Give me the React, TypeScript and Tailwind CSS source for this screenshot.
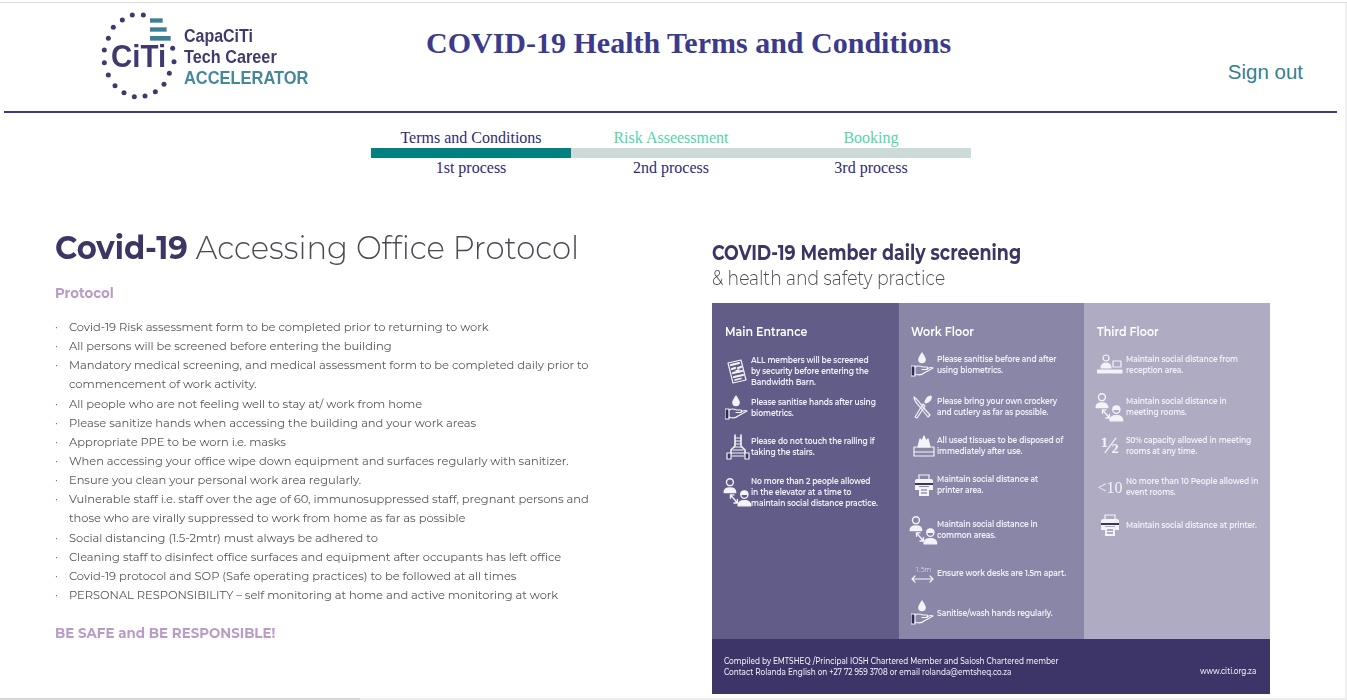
const sans = "font-['Montserrat','Open_Sans','Noto_Sans',sans-serif]";

type IconName = "form" | "hand" | "stairs" | "people" | "cutlery" | "tissue" | "printer" | "arrow" | "desk" | "half" | "lt10";

function Icon({ name }: { name: IconName }) {
  const c = { fill: "none", stroke: "#f4f3f8", strokeWidth: 1.2, strokeLinecap: "round" as const, strokeLinejoin: "round" as const };
  const w = "#f4f3f8";
  if (name === "people") {
    return (
      <svg width="30" height="30" viewBox="0 0 26 26" className="shrink-0 mx-[-2px] my-[-2px]">
        <g {...c}>
          <circle cx="6" cy="4.500" r="3" />
          <path d="M1 13.500c0-3 2-4 5-4s5 1 5 4z" fill={w} />
          <circle cx="18.500" cy="15.500" r="3" fill="none" />
          <path d="M15.500 15c0-2 1.500-3 3-3s3 1 3 3z" fill={w} />
          <path d="M13 25c0-3 2-4.500 5.500-4.500S24 22 24 25z" fill={w} />
          <path d="M6.500 15.500l6 7M6.500 15.500v3M6.500 15.500h3M12.500 22.500h-3M12.500 22.500v-3" />
        </g>
      </svg>
    );
  }
  return (
    <svg width="26" height="26" viewBox="0 0 26 26" className="shrink-0">
      {name === "form" && (
        <g {...c}>
          <path d="M3 5l13-3 5 20-13 3z" />
          <path d="M6 7l8-2M7 11l3-1M13 10l3-1M8 15l9-2M9 19l9-2" strokeWidth={2.2} />
          <path d="M11 13l3-1M10 22l6-1.500" strokeWidth={1.6} />
        </g>
      )}
      {name === "hand" && (
        <g {...c}>
          <path d="M11 1c-1.800 3-3.200 4.500-3.200 6.500a3.200 3.200 0 006.400 0C14.200 5.500 12.800 4 11 1z" fill={w} />
          <path d="M0 14h4v10H0z" fill="#2e2a55" />
          <path d="M4 15c3-2 5-1 8 0h4c1.500 1 .5 2.500-1 2.500h-4M4 22c5 2 7 1 9-1l9-5c-2-1.500-4 0-7 1.500" />
        </g>
      )}
      {name === "stairs" && (
        <g {...c}>
          <path d="M10 1v11L6 16v4M16 1v11l4 4v4" strokeWidth={1.6} />
          <path d="M10 4h6M10 7h6M10 10h6M9 13h8M8 16h10M7 19h12M7 22h12" />
          <path d="M2 19h4v6H2zM20 19h4v6h-4z" fill="#3a3560" />
        </g>
      )}
      {name === "cutlery" && (
        <g {...c}>
          <path d="M3 3c0 4 3 7 6 10l8 10 2-2-8-9C9 9 6 5 3 3z" />
          <path d="M4 23l2 1L14 12l-2-2z" />
          <path d="M15 9l-1-1c1-3 3-6 6-6 1 2-1 6-5 7z" fill={w} />
        </g>
      )}
      {name === "tissue" && (
        <g {...c}>
          <path d="M3 14h20v9H3zM3 19h20" />
          <path d="M7 14l2-8 2 2 2-5 2 5 2-2 2 8z" fill={w} />
        </g>
      )}
      {name === "printer" && (
        <g>
          <path d="M8 3h10v5H8z" fill="none" stroke={w} strokeWidth="1.200" />
          <path d="M6 7h14c1.500 0 2 1 2 2v9h-4v-4H8v4H4V9c0-1 .5-2 2-2z" fill={w} />
          <path d="M4 11h18v2H4z" fill="#3a3560" />
          <path d="M8 15h10v9H8z" fill={w} />
          <path d="M10 18h6M10 21h6" stroke="#6a6590" strokeWidth="1" />
        </g>
      )}
      {name === "arrow" && (
        <g {...c}>
          <path d="M1 19h21M4 16l-3 3 3 3M19 16l3 3-3 3" />
          <text x="4" y="12" fontSize="7" fill={w} stroke="none" fontWeight="300" fontFamily="Open Sans">1.5m</text>
        </g>
      )}
      {name === "desk" && (
        <g {...c}>
          <circle cx="9" cy="6" r="3" />
          <path d="M4 16c0-3 2-5 5-5s5 2 5 5z" fill={w} />
          <path d="M16 9h8v6h-8z" />
          <path d="M0 18h25v3H0z" fill={w} />
        </g>
      )}
      {name === "half" && (
        <text x="13" y="20" textAnchor="middle" fontSize="24" fontWeight="700" fill={w} fontFamily="Liberation Serif">½</text>
      )}
      {name === "lt10" && (
        <text x="13" y="19" textAnchor="middle" fontSize="16" fill={w} fontFamily="Liberation Serif">&lt;10</text>
      )}
    </svg>
  );
}

function Row({ icon, lines, className }: { icon: IconName; lines: string[]; className: string }) {
  return (
    <div className={`flex items-center ${className}`}>
      <Icon name={icon} />
      <div className="text-[8.500px] leading-[11px] font-semibold text-[#f1f0f6] tracking-[-0.1px] whitespace-nowrap scale-x-[0.89] origin-left">
        {lines.map((l) => (
          <div key={l}>{l}</div>
        ))}
      </div>
    </div>
  );
}

const protocol = [
  ["Covid-19 Risk assessment form to be completed prior to returning to work"],
  ["All persons will be screened before entering the building"],
  ["Mandatory medical screening, and medical assessment form to be completed daily prior to", "commencement of work activity."],
  ["All people who are not feeling well to stay at/ work from home"],
  ["Please sanitize hands when accessing the building and your work areas"],
  ["Appropriate PPE to be worn i.e. masks"],
  ["When accessing your office wipe down equipment and surfaces regularly with sanitizer."],
  ["Ensure you clean your personal work area regularly."],
  ["Vulnerable staff i.e. staff over the age of 60, immunosuppressed staff, pregnant persons and", "those who are virally suppressed to work from home as far as possible"],
  ["Social distancing (1.5-2mtr) must always be adhered to"],
  ["Cleaning staff to disinfect office surfaces and equipment after occupants has left office"],
  ["Covid-19 protocol and SOP (Safe operating practices) to be followed at all times"],
  ["PERSONAL RESPONSIBILITY – self monitoring at home and active monitoring at work"],
];

const steps = [
  { top: "Terms and Conditions", bottom: "1st process", active: true },
  { top: "Risk Asseessment", bottom: "2nd process", active: false },
  { top: "Booking", bottom: "3rd process", active: false },
];

function Logo() {
  const dots: [number, number][] = [
    [190, 45], [157, 45], [127, 60], [100, 82], [85, 115], [73, 150], [73, 188], [85, 225], [105, 257],
    [132, 278], [163, 290], [195, 288], [226, 275], [252, 253], [268, 220], [282, 185], [278, 145],
  ];
  const label = "absolute left-[83px] font-['Liberation_Sans',sans-serif] font-bold text-[19px] leading-[20px] whitespace-nowrap origin-left";
  return (
    <div className="relative w-[210px] h-[90px] blur-[0.4px]">
      <svg width="260" height="120" viewBox="0 0 780 360" className="absolute left-[-21px] top-[-11px]">
        {dots.map(([x, y]) => (
          <circle key={`${x}-${y}`} cx={x} cy={y} r="7.500" fill="#3f3a6d" />
        ))}
        <rect x="210" y="55" width="38" height="13" fill="#3d8095" />
        <rect x="210" y="82" width="50" height="13" fill="#3d8095" />
        <rect x="210" y="108" width="62" height="14" fill="#3d8095" />
      </svg>
      <div className="absolute left-[10px] top-[30px] font-['Liberation_Sans',sans-serif] font-bold text-[32px] leading-[30px] text-[#3f3a6d] scale-x-[0.92] origin-left">CiTi</div>
      <div className={`${label} top-[15px] text-[#3f3a6d] scale-x-[0.84]`}>CapaCiTi</div>
      <div className={`${label} top-[36px] text-[#3f3a6d] scale-x-[0.855]`}>Tech Career</div>
      <div className={`${label} top-[57px] text-[#45889a] scale-x-[0.865]`}>ACCELERATOR</div>
    </div>
  );
}

export default function App() {
  return (
    <div className="w-[1347px] h-[700px] overflow-hidden bg-white flex flex-col">
      <div className="mt-[2px] h-px bg-[#dcdcdc] shrink-0" />
      <div className="flex-1 min-h-0 flex">
        <div className="flex-1 min-w-0 flex flex-col">
          <header className="h-[108px] flex ml-[4px] mr-[8px] shrink-0 border-b-2 border-[#3c3a8a] box-content">
            <div className="w-[97px] shrink-0" />
            <div className="pt-[8px]"><Logo /></div>
            <h1 className="ml-[115px] pt-[23px] font-['Liberation_Serif',serif] font-bold text-[30px] leading-[34px] text-[#3c3a8a] whitespace-nowrap">
              COVID-19 Health Terms and Conditions
            </h1>
            <a className="ml-auto mr-[34px] pt-[57px] font-['Liberation_Sans',sans-serif] text-[20.500px] leading-[24px] text-[#347f8f]">Sign out</a>
          </header>

          <div className="flex justify-center mt-[16px] pr-[2px] font-['Liberation_Serif',serif] text-[16px] shrink-0 ml-[-1px]">
            {steps.map((s) => (
              <div key={s.top} className="w-[200px] text-center">
                <div className={`leading-[18px] ${s.active ? "text-[#2f2b72]" : "text-[#4fd6a8]"}`}>{s.top}</div>
                <div className={`h-[10px] mt-px ${s.active ? "bg-[#008080]" : "bg-[#cddada]"}`} />
                <div className="leading-[18px] mt-px text-[#2f2b72]">{s.bottom}</div>
              </div>
            ))}
          </div>

          <main className={`flex-1 min-h-0 flex pl-[55px] blur-[0.3px] ${sans}`}>
            <section className="w-[657px] shrink-0 pt-[48px]">
              <h2 className="text-[33px] leading-[44px] text-[#4a4a55] font-light whitespace-nowrap scale-x-[0.93] origin-left">
                <span className="font-bold text-[#3d3564]">Covid-19</span> Accessing Office Protocol
              </h2>
              <div className="mt-[14px] text-[14px] leading-[20px] font-bold text-[#b89cc4] scale-x-[0.95] origin-left">Protocol</div>
              <ul className="mt-[15px] text-[11.500px] leading-[19.140px] tracking-[-0.05px] text-[#55555e]">
                {protocol.map((lines) => (
                  <li key={lines[0]} className="flex">
                    <span className="w-[14px] shrink-0">·</span>
                    <div className="whitespace-nowrap">
                      {lines.map((l) => (
                        <div key={l}>{l}</div>
                      ))}
                    </div>
                  </li>
                ))}
              </ul>
              <div className="mt-[18px] text-[14px] leading-[20px] font-bold text-[#b89cc4] whitespace-nowrap scale-x-[0.957] origin-left">BE SAFE and BE RESPONSIBLE!</div>
            </section>

            <section className="w-[558px] shrink-0 pt-[63px]">
              <div className="text-[21px] leading-[25px] font-bold text-[#3d3564] whitespace-nowrap scale-x-[0.83] origin-left">COVID-19 Member daily screening</div>
              <div className="mt-px text-[20px] leading-[25px] font-light text-[#4a4a55] whitespace-nowrap scale-x-[0.856] origin-left">&amp; health and safety practice</div>
              <div className="mt-[12px] flex h-[336px]">
                <div className="w-[187px] bg-[#625c88] pl-[13px] pt-[20px]">
                  <div className="text-[13px] leading-[16px] font-semibold text-white scale-x-[0.85] origin-left">Main Entrance</div>
                  <Row className="mt-[15.500px]" icon="form" lines={["ALL members will be screened", "by security before entering the", "Bandwidth Barn."]} />
                  <Row className="mt-[7.500px]" icon="hand" lines={["Please sanitise hands after using", "biometrics."]} />
                  <Row className="mt-[13px]" icon="stairs" lines={["Please do not touch the railing if", "taking the stairs."]} />
                  <Row className="mt-[15.500px]" icon="people" lines={["No more than 2 people allowed", "in the elevator at a time to", "maintain social distance practice."]} />
                </div>
                <div className="w-[185px] bg-[#8a86a8] pl-[12px] pt-[20px]">
                  <div className="text-[13px] leading-[16px] font-semibold text-white scale-x-[0.85] origin-left">Work Floor</div>
                  <Row className="mt-[13px]" icon="hand" lines={["Please sanitise before and after", "using biometrics."]} />
                  <Row className="mt-[16px]" icon="cutlery" lines={["Please bring your own crockery", "and cutlery as far as possible."]} />
                  <Row className="mt-[13px]" icon="tissue" lines={["All used tissues to be disposed of", "immediately after use."]} />
                  <Row className="mt-[13px]" icon="printer" lines={["Maintain social distance at", "printer area."]} />
                  <Row className="mt-[19px]" icon="people" lines={["Maintain social distance in", "common areas."]} />
                  <Row className="mt-[17px]" icon="arrow" lines={["Ensure work desks are 1.5m apart."]} />
                  <Row className="mt-[14px]" icon="hand" lines={["Sanitise/wash hands regularly."]} />
                </div>
                <div className="w-[186px] bg-[#aeabc3] pl-[13px] pt-[20px]">
                  <div className="text-[13px] leading-[16px] font-semibold text-white scale-x-[0.85] origin-left">Third Floor</div>
                  <Row className="mt-[13px] gap-[3px]" icon="desk" lines={["Maintain social distance from", "reception area."]} />
                  <Row className="mt-[16px] gap-[3px]" icon="people" lines={["Maintain social distance in", "meeting rooms."]} />
                  <Row className="mt-[13px] gap-[3px]" icon="half" lines={["50% capacity allowed in meeting", "rooms at any time."]} />
                  <Row className="mt-[15px] gap-[3px]" icon="lt10" lines={["No more than 10 People allowed in", "event rooms."]} />
                  <Row className="mt-[12px] gap-[3px]" icon="printer" lines={["Maintain social distance at printer."]} />
                </div>
              </div>
              <div className="h-[55px] w-[558px] bg-[#3d3468] flex items-center justify-between pl-[12px] pr-[14px] text-[8.500px] leading-[11px] font-medium text-[#eeedf4]">
                <div className="whitespace-nowrap scale-x-[0.862] origin-left">
                  <div>Compiled by EMTSHEQ /Principal IOSH Chartered Member and Saiosh Chartered member</div>
                  <div>Contact Rolanda English on +27 72 959 3708 or email rolanda@emtsheq.co.za</div>
                </div>
                <div className="mt-[10px] scale-x-[0.862] origin-right">www.citi.org.za</div>
              </div>
            </section>
          </main>
        </div>
        <div className="w-[2px] bg-[#f0f0f0] shrink-0" />
      </div>
      <div className="h-[2px] flex shrink-0">
        <div className="w-[360px] bg-[#d6d6d6]" />
        <div className="flex-1 bg-[#eeeeee]" />
      </div>
    </div>
  );
}
